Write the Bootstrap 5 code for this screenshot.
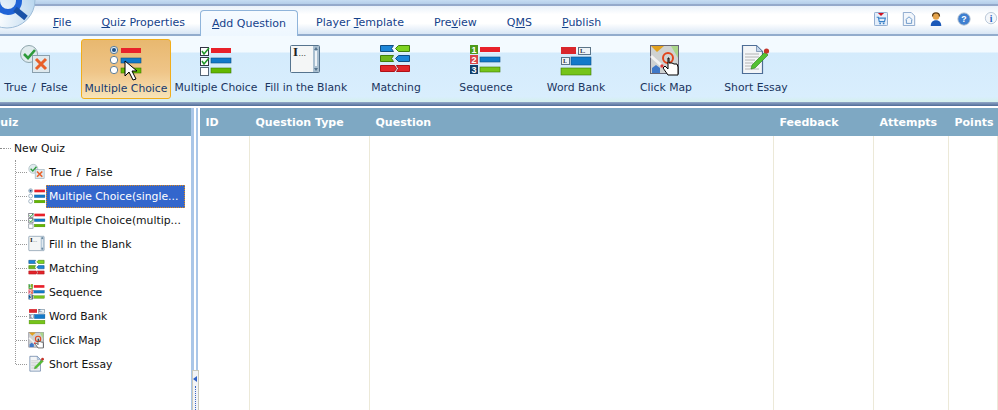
<!DOCTYPE html>
<html lang="en"><head><meta charset="utf-8"><title>Quiz</title>
<link href="https://cdn.jsdelivr.net/npm/bootstrap@5.3.0/dist/css/bootstrap.min.css" rel="stylesheet">
<style>
html,body{margin:0;width:998px;height:410px;overflow:hidden;background:#fff;font-family:"DejaVu Sans","Liberation Sans",sans-serif;font-size:10.8px;color:#000}
.app{width:998px;height:410px;position:relative;overflow:hidden}
.logoorb{position:absolute;left:0;top:0;width:40px;height:32px;z-index:3}
.topstrip{height:4px;background:linear-gradient(#c6dcf2,#b4cde9);overflow:hidden}
.apptitle{display:block;margin:-11px 0 0 516px;line-height:13px;color:#15428b}
.topline{height:2px;background:#94a9cb}
.tabbar{height:30px;background:linear-gradient(#e9f1fa 0,#fff 30%,#fff 62%,#d8e6f5 100%);padding-left:38px;border-bottom:2px solid #92accd;align-items:flex-end;position:relative}
.tabi{height:24px;padding:0 15px;color:#15428b;line-height:26px;white-space:nowrap;font-size:11px}
.tabi u{text-underline-offset:1px}
.tabi.on{background:linear-gradient(#f6fbff,#eef7ff);border:1px solid #8fb4da;border-bottom:0;border-radius:4px 4px 0 0;margin:0 3px 0 0;height:26px;margin-bottom:-2px;line-height:25px;padding:0 11px;z-index:1}
.rtools{height:26px;gap:13.5px;align-items:center;position:absolute;right:0;top:0}
.rtools svg{width:14px;height:14px;display:block}
.ribbon{height:66px;background:linear-gradient(#f3faff 0,#f3faff 24%,#d4ebfc 26%,#d9eefd 92%,#d4f0ec 100%)}
.rbtn{width:90px;height:60px;margin-top:3px;display:flex;flex-direction:column;align-items:center;color:#1a3560;white-space:nowrap;border:1px solid transparent;padding-top:4px;flex:none}
.rbtn svg{width:34px;height:32px;display:block;overflow:visible;flex:none}
.rbtn span{margin-top:4px;line-height:16px}
.rbtn.first{width:72px;margin-right:9px}
.rbtn.on{background:linear-gradient(#e8b86f,#efc588 55%,#f8e4b8);border-color:#f0ad1c;border-radius:3px;color:#143a70}
.rbtn.on span{margin-top:5px}
.wsp{word-spacing:1.5px}
.rband{height:4px;background:linear-gradient(#93a9c8,#4f6c98)}
.gapw{height:2px;background:#fff}
.main{height:302px}
.tree{width:191px;flex:none;background:#fff;overflow:hidden}
.hdrbar{height:28px;background:#7ea8c3;color:#fff;font-weight:700;line-height:30px;white-space:nowrap;font-size:11px}
.treeh span{display:block;margin-left:-9px}
.splitter{width:9px;flex:none;background:linear-gradient(90deg,#a9c6e8 0,#a9c6e8 3px,#fff 3px,#fff 5px,#a9c6e8 5px,#a9c6e8 7px,#fff 7px);position:relative}
.snub{position:absolute;left:1px;top:262px;width:7px;height:40px;background:#f2f4f6;border:1px solid #c9c9bb;border-bottom:0}
.snub::before{content:"";position:absolute;left:0;top:5px;border:3px solid transparent;border-right:4px solid #2f62c8;border-left:0}
.snub::after{content:"";position:absolute;left:2px;top:15px;height:24px;border-left:1px dotted #3a66c8}
.grid{flex:1;min-width:0;overflow:hidden}
.cell{flex:none;overflow:hidden}
.cbody{height:274px}
.cbody .cell{height:100%;border-right:1px solid #ece9d8}
.w1{width:50px}.w2{width:120px}.w3{width:404px}.w4{width:100px}.w5{width:75px}.w6{width:49px}
.hdrbar .cell{padding-left:5.5px}
.rootn{height:24px;padding-left:14px;line-height:26px;position:relative;color:#111}
.rootn::before{content:"";position:absolute;left:3px;top:12px;width:8px;border-top:1px dotted #999}
.rootn::after{content:"";position:absolute;left:0;top:12px;width:2px;height:1px;background:#888}
.tlist{position:relative;margin-left:15px}
.tlist::before{content:"";position:absolute;left:0;top:0;height:204px;border-left:1px dotted #999}
.tnode{height:24px;display:flex;align-items:center;white-space:nowrap;position:relative;color:#111;padding-left:13px}
.tnode::before{content:"";position:absolute;left:1px;top:12px;width:11px;border-top:1px dotted #999}
.tnode svg{width:18px;height:18px;flex:none;display:block}
.tnode span{padding-left:3px;line-height:23px;height:23px}
.tnode .sel{background:#3366cc;color:#fff;outline:1px dotted #e08a1a;outline-offset:-1px;width:139px}
</style></head><body>
<svg width="0" height="0" class="position-absolute">
<defs>
<symbol id="i-tf" viewBox="0 0 34 32"><circle cx="10" cy="10" r="8.5" fill="#e0ebee" stroke="#8fa6ad"/><path d="M5 10l4 4 7-8" fill="none" stroke="#2d9a3a" stroke-width="2.6"/><rect x="13.500" y="11.500" width="17" height="17" fill="#dfe9ee" stroke="#8aa0ae"/><path d="M17 15l10 10M27 15L17 25" stroke="#e8602a" stroke-width="3"/></symbol>
<symbol id="i-mc1" viewBox="0 0 34 32"><circle cx="5" cy="6" r="3.700" fill="#dbe8f3" stroke="#5f7f98"/><circle cx="5" cy="6" r="2" fill="#1c4f86"/><circle cx="5" cy="16" r="3.700" fill="#fff" stroke="#5f7f98"/><circle cx="5" cy="26" r="3.700" fill="#fff" stroke="#5f7f98"/><rect x="12" y="4" width="20" height="5" fill="#e8212a"/><rect x="12" y="14" width="20" height="5" fill="#1279c9" stroke="#0c4f86" stroke-width=".6"/><rect x="12" y="24" width="20" height="5" fill="#64b800" stroke="#3c7a00" stroke-width=".6"/></symbol>
<symbol id="i-mc2" viewBox="0 0 34 32"><rect x="1.500" y="3.500" width="8" height="8" fill="#fff" stroke="#334"/><rect x="1.500" y="13.500" width="8" height="8" fill="#fff" stroke="#334"/><rect x="1.500" y="23.500" width="8" height="8" fill="#fff" stroke="#567"/><path d="M3 7l2 3 5-6M3 17l2 3 5-6" fill="none" stroke="#239a2c" stroke-width="1.600"/><rect x="12" y="4" width="20" height="5" fill="#e8212a"/><rect x="12" y="14" width="20" height="5" fill="#1279c9" stroke="#0c4f86" stroke-width=".6"/><rect x="12" y="24" width="20" height="5" fill="#64b800" stroke="#3c7a00" stroke-width=".6"/></symbol>
<symbol id="i-fill" viewBox="0 0 34 32"><rect x="1.500" y="1.500" width="29" height="27" rx="1" fill="#f4f6f6" stroke="#56748e"/><rect x="24" y="2" width="6" height="26" fill="#a9bfd0"/><rect x="26" y="7" width="2" height="15" fill="#eef3f7"/><path d="M25 6l2-3 2 3zM25 24l2 3 2-3z" fill="#56748e"/><text x="4" y="12" font-family="Liberation Serif,serif" font-weight="700" font-size="13" fill="#222">I</text><text x="9.500" y="12" font-family="Liberation Sans,sans-serif" font-size="9" fill="#444">...</text></symbol>
<symbol id="i-match" viewBox="0 0 34 32"><path d="M1.500 1.500h13l-2 3 2 3h-13z" fill="#1c86d8" stroke="#0f4d84"/><path d="M19.500 1.500h11v6h-11l-3-3z" fill="#7ed321" stroke="#3f7d0c"/><path d="M1.500 11.500h13l-2 3 2 3h-13z" fill="#6fb81c" stroke="#3f7d0c"/><path d="M19.500 11.500h11v6h-11l-3-3z" fill="#1c86d8" stroke="#0f4d84"/><path d="M1.500 21.500h14l2 3-2 3h-14zM17.500 21.500h13v6h-13l2-3z" fill="#e2252b" stroke="#b01217"/></symbol>
<symbol id="i-seq" viewBox="0 0 34 32"><rect x="1" y="1" width="8" height="9" fill="#4d9a1a"/><rect x="1" y="11" width="8" height="9" fill="#d9454a"/><rect x="1" y="21" width="8" height="9" fill="#123f6b"/><g font-family="Liberation Sans,sans-serif" font-weight="700" font-size="9" fill="#fff" text-anchor="middle"><text x="5" y="9">1</text><text x="5" y="19">2</text><text x="5" y="29">3</text></g><rect x="11" y="3" width="20" height="5" fill="#e8212a"/><rect x="11" y="13" width="20" height="5" fill="#1279c9" stroke="#0c4f86" stroke-width=".6"/><rect x="11" y="23" width="20" height="5" fill="#76c41a" stroke="#3c7a00" stroke-width=".6"/></symbol>
<symbol id="i-wb" viewBox="0 0 34 32"><rect x="2" y="3" width="15" height="7" fill="#d9262c"/><rect x="19.500" y="3.500" width="12" height="7" fill="#eef3f6" stroke="#5b7488"/><rect x="2.500" y="13.500" width="8" height="7" fill="#eef3f6" stroke="#5b7488"/><rect x="12" y="13" width="20" height="8" fill="#1279c9" stroke="#0c4f86" stroke-width=".6"/><rect x="2" y="24" width="30" height="7" fill="#76c41a" stroke="#3c7a00" stroke-width=".6"/><g font-family="Liberation Serif,serif" font-weight="700" font-size="6" fill="#223"><text x="21" y="9">I..</text><text x="4" y="19">I.</text></g></symbol>
<symbol id="i-map" viewBox="0 0 34 32" overflow="visible"><rect x="1.500" y="1.500" width="28" height="28" fill="#cfd2d2" stroke="#667"/><path d="M2 2h13l-7 6z" fill="#e2a11e"/><path d="M22 2h7v12z" fill="#a9d68a"/><path d="M2 12l20 18" stroke="#f2f2f2" stroke-width="3"/><path d="M3 29v-5l4-3 4 3v5z" fill="#3f78c8"/><circle cx="13" cy="22" r="1.700" fill="#d93a3a"/><circle cx="19" cy="14" r="5" fill="none" stroke="#e2451c" stroke-width="2"/><path d="M19 14v11l-3-3-2 2 5 7h10v-8l-1-3h-3l-2-1h-3v-5z" fill="#fff" stroke="#000"/></symbol>
<symbol id="i-essay" viewBox="0 0 34 32" overflow="visible"><path d="M3.500 1.500h14l6 6v22h-20z" fill="#f3f5f7" stroke="#4d6d96" stroke-width="1.200"/><path d="M17.500 1.500v6h6z" fill="#c3d5ea" stroke="#4d6d96" stroke-width=".6"/><path d="M6 10h14M6 13h14M6 16h10M6 19h8M6 22h9M6 25h14" stroke="#b4b4b4"/><path d="M13 21l13-13 3 3-13 13-4 1z" fill="#53c032" stroke="#2a7a18" stroke-width=".6"/><circle cx="27.500" cy="7" r="2.600" fill="#c5352a"/></symbol>
</defs></svg>
<div class="app">
<svg class="logoorb" viewBox="0 0 40 32"><defs><radialGradient id="orb" cx=".3" cy=".85" r=".8"><stop offset="0" stop-color="#ffffff"/><stop offset="1" stop-color="#b5d4ee"/></radialGradient></defs><circle cx="7" cy="0" r="28" fill="url(#orb)" stroke="#9dbcd8"/><circle cx="8" cy="1" r="11" fill="none" stroke="#1f63d6" stroke-width="6"/><path d="M15 9l11 9" stroke="#1a52a8" stroke-width="5.500"/></svg>
<div class="topstrip"><span class="apptitle">Quiz</span></div><div class="topline"></div>
<div class="d-flex tabbar">
 <div class="tabi"><u>F</u>ile</div>
 <div class="tabi"><u>Q</u>uiz Properties</div>
 <div class="tabi on"><u>A</u>dd Question</div>
 <div class="tabi">Player <u>T</u>emplate</div>
 <div class="tabi">Pre<u>v</u>iew</div>
 <div class="tabi">Q<u>M</u>S</div>
 <div class="tabi"><u>P</u>ublish</div>
 <div class="d-flex rtools">
  <svg viewBox="0 0 16 16"><rect x=".5" y=".5" width="15" height="15" rx="1" fill="#e4eefa" stroke="#7f9fc7"/><path d="M4.500 1h7l-3.500 3.500z" fill="#d01020"/><path d="M3 6h2l1 5h6l1-4H5" fill="none" stroke="#3a82c8" stroke-width="1.300"/><circle cx="7" cy="13" r="1" fill="#3a82c8"/><circle cx="11" cy="13" r="1" fill="#3a82c8"/></svg>
  <svg viewBox="0 0 16 16"><path d="M1.500 .5h9l4 4v11h-13z" fill="#f2f6fb" stroke="#7f9fc7"/><path d="M4 9l4-3.500L12 9M5 9v4h6V9" fill="none" stroke="#5f8fc4"/></svg>
  <svg viewBox="0 0 16 16"><circle cx="8" cy="5" r="3.800" fill="#e3a24a"/><path d="M4 5a4 4 0 018 0" fill="none" stroke="#5c3a10" stroke-width="1.400"/><path d="M2 16c0-5 3-6.500 6-6.500s6 1.500 6 6.500z" fill="#1b58b8"/></svg>
  <svg viewBox="0 0 16 16"><circle cx="8" cy="8" r="7" fill="#3f7fd0" stroke="#a9b9cc"/><text x="8" y="11.500" text-anchor="middle" font-family="Liberation Sans,sans-serif" font-weight="700" font-size="10" fill="#fff">?</text></svg>
  <svg viewBox="0 0 16 16"><circle cx="8" cy="7" r="6.500" fill="#f4f7fb" stroke="#b3c2d4"/><text x="8" y="11" text-anchor="middle" font-family="Liberation Serif,serif" font-weight="700" font-size="11" fill="#2a62c0">i</text></svg>
 </div>
</div>
<div class="d-flex ribbon">
 <div class="rbtn first"><svg><use href="#i-tf"/></svg><span class="wsp">True / False</span></div>
 <div class="rbtn on"><svg><use href="#i-mc1"/><path d="M16 17v15l4-4 4 8 3-1-4-8h5z" fill="#fff" stroke="#000"/></svg><span>Multiple Choice</span></div>
 <div class="rbtn"><svg><use href="#i-mc2"/></svg><span>Multiple Choice</span></div>
 <div class="rbtn"><svg><use href="#i-fill"/></svg><span>Fill in the Blank</span></div>
 <div class="rbtn"><svg><use href="#i-match"/></svg><span>Matching</span></div>
 <div class="rbtn"><svg><use href="#i-seq"/></svg><span>Sequence</span></div>
 <div class="rbtn"><svg><use href="#i-wb"/></svg><span>Word Bank</span></div>
 <div class="rbtn"><svg><use href="#i-map"/></svg><span>Click Map</span></div>
 <div class="rbtn"><svg><use href="#i-essay"/></svg><span>Short Essay</span></div>
</div>
<div class="rband"></div><div class="gapw"></div>
<div class="d-flex main">
 <div class="tree">
  <div class="hdrbar treeh"><span>Quiz</span></div>
  <div class="rootn">New Quiz</div>
  <div class="tlist">
   <div class="tnode"><svg><use href="#i-tf"/></svg><span class="wsp">True / False</span></div>
   <div class="tnode"><svg><use href="#i-mc1"/></svg><span class="sel">Multiple Choice(single...</span></div>
   <div class="tnode"><svg><use href="#i-mc2"/></svg><span>Multiple Choice(multip...</span></div>
   <div class="tnode"><svg><use href="#i-fill"/></svg><span>Fill in the Blank</span></div>
   <div class="tnode"><svg><use href="#i-match"/></svg><span>Matching</span></div>
   <div class="tnode"><svg><use href="#i-seq"/></svg><span>Sequence</span></div>
   <div class="tnode"><svg><use href="#i-wb"/></svg><span>Word Bank</span></div>
   <div class="tnode"><svg><use href="#i-map"/></svg><span>Click Map</span></div>
   <div class="tnode"><svg><use href="#i-essay"/></svg><span>Short Essay</span></div>
  </div>
 </div>
 <div class="splitter"><div class="snub"></div></div>
 <div class="grid">
  <div class="d-flex hdrbar">
   <div class="cell w1">ID</div><div class="cell w2">Question Type</div><div class="cell w3">Question</div><div class="cell w4">Feedback</div><div class="cell w5">Attempts</div><div class="cell w6">Points</div>
  </div>
  <div class="d-flex cbody">
   <div class="cell w1"></div><div class="cell w2"></div><div class="cell w3"></div><div class="cell w4"></div><div class="cell w5"></div><div class="cell w6"></div>
  </div>
 </div>
</div>
</div>
</body></html>
